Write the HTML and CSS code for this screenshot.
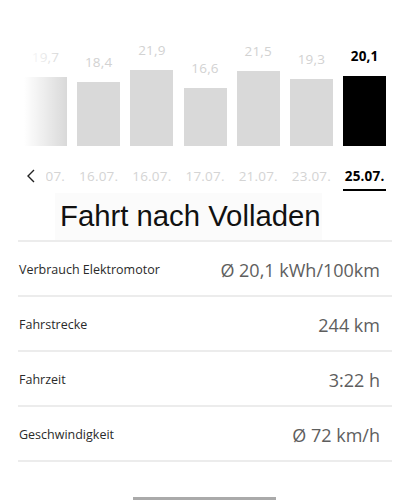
FILE: index.html
```html
<!DOCTYPE html>
<html lang="de">
<head>
<meta charset="utf-8">
<link rel="stylesheet" href="styles.css">
</head>
<body>
<div class="page">
  <div class="chart">
    <div class="col"><span class="val">19,7</span><div class="bar" style="height:69px"></div></div>
    <div class="col"><span class="val">18,4</span><div class="bar" style="height:64px"></div></div>
    <div class="col"><span class="val">21,9</span><div class="bar" style="height:76px"></div></div>
    <div class="col"><span class="val">16,6</span><div class="bar" style="height:58px"></div></div>
    <div class="col"><span class="val">21,5</span><div class="bar" style="height:75px"></div></div>
    <div class="col"><span class="val">19,3</span><div class="bar" style="height:67px"></div></div>
    <div class="col active"><span class="val">20,1</span><div class="bar" style="height:70px"></div></div>
    <div class="fade"></div>
  </div>
  <div class="dates">
    <div class="date">15.07.</div>
    <div class="date">16.07.</div>
    <div class="date">16.07.</div>
    <div class="date">17.07.</div>
    <div class="date">21.07.</div>
    <div class="date">23.07.</div>
    <div class="date active">25.07.</div>
    <div class="back"><svg width="12" height="16" viewBox="0 0 12 16"><polyline points="8,2 2,8 8,14" fill="none" stroke="#222" stroke-width="1.4"/></svg></div>
  </div>
  <div class="title-box"><h1 class="title">Fahrt nach Volladen</h1></div>
  <div class="list">
    <div class="row"><span class="label">Verbrauch Elektromotor</span><span class="value">Ø 20,1 kWh/100km</span></div>
    <div class="row"><span class="label">Fahrstrecke</span><span class="value">244 km</span></div>
    <div class="row"><span class="label">Fahrzeit</span><span class="value">3:22 h</span></div>
    <div class="row"><span class="label">Geschwindigkeit</span><span class="value">Ø 72 km/h</span></div>
  </div>
  <div class="home"></div>
</div>
</body>
</html>
```
FILE: styles.css
```css
html, body {
  margin: 0;
  padding: 0;
  background: #fff;
}
.page {
  width: 410px;
  height: 500px;
  position: relative;
  overflow: hidden;
  font-family: "Open Sans", "Noto Sans", sans-serif;
  color: #111;
}
.chart {
  position: relative;
  height: 146px;
  display: flex;
  align-items: flex-end;
  gap: 10.2px;
  padding-left: 24px;
  box-sizing: border-box;
}
.col {
  width: 43px;
  display: flex;
  flex-direction: column;
  align-items: center;
}
.val {
  font-size: 13.5px;
  line-height: 16px;
  color: #d2d2d2;
  margin-bottom: 12px;
  letter-spacing: 0.2px;
}
.bar {
  width: 43px;
  background: #d9d9d9;
}
.col.active .val {
  color: #000;
  font-weight: 700;
}
.col.active .bar {
  background: #000;
}
.fade {
  position: absolute;
  left: 0;
  top: 0;
  width: 67px;
  height: 146px;
  background: linear-gradient(to right, #fff 0px, #fff 24px, rgba(255,255,255,0) 67px);
}
.dates {
  position: relative;
  display: flex;
  gap: 10.2px;
  padding-left: 24px;
  padding-top: 21px;
  height: 47px;
  box-sizing: border-box;
}
.date {
  width: 43px;
  text-align: center;
  font-size: 13.5px;
  line-height: 18px;
  height: 24px;
  color: #d4d4d4;
  white-space: nowrap;
  box-sizing: border-box;
  letter-spacing: 0.2px;
}
.date.active {
  color: #000;
  font-weight: 700;
  border-bottom: 2px solid #000;
}
.back {
  position: absolute;
  left: 0;
  top: 0;
  width: 46px;
  height: 47px;
  background: #fff;
  padding: 22px 0 0 26px;
  box-sizing: border-box;
}
.back svg {
  display: block;
}
.title-box {
  margin-left: 55px;
  width: 267px;
  height: 47px;
  background: #fbfbfb;
  padding-left: 5px;
  box-sizing: border-box;
}
.title {
  margin: 0;
  font-family: "Liberation Sans", Arial, sans-serif;
  font-weight: 400;
  font-size: 29.3px;
  line-height: 46px;
  color: #111;
  white-space: nowrap;
}
.list {
  margin: 0 18px;
  border-bottom: 2px solid #ececec;
}
.row {
  height: 55px;
  border-top: 2px solid #ececec;
  box-sizing: border-box;
  display: flex;
  align-items: center;
  justify-content: space-between;
  padding: 2px 12px 0 1px;
}
.label {
  font-size: 12.5px;
  color: #2a2a2a;
}
.value {
  font-size: 18px;
  font-weight: 400;
  color: #5e5e5e;
}
.home {
  position: absolute;
  left: 133px;
  bottom: 0;
  width: 143px;
  height: 3px;
  background: #aaa;
}
```
